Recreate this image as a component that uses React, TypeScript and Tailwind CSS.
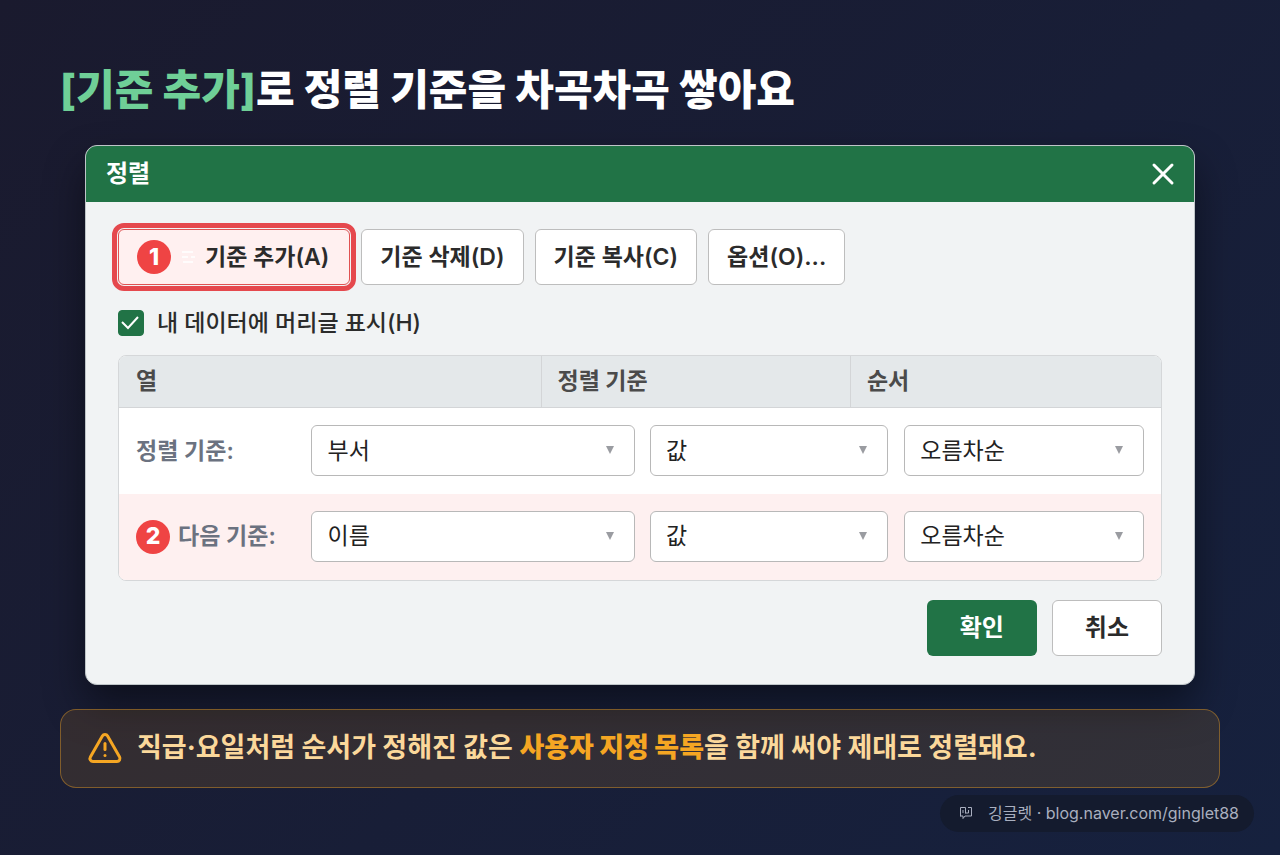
import { useState } from "react";
import { TriangleAlert, X } from "lucide-react";
import clsx from "clsx";

const columnOptions = ["부서", "이름", "직급"];
const valueOptions = ["값", "셀 색", "글꼴 색"];
const orderOptions = ["오름차순", "내림차순", "사용자 지정 목록"];

const levels = [
  { id: "sort-by", label: "정렬 기준:", column: "부서", step: null },
  { id: "then-by", label: "다음 기준:", column: "이름", step: 2 },
];

function StepBadge({ step }: { step: number }) {
  return (
    <span className="flex size-[34px] shrink-0 items-center justify-center rounded-full bg-[#ef4444] text-[23px] leading-none font-extrabold text-white">
      {step}
    </span>
  );
}

type SelectBoxProps = {
  id?: string;
  label?: string;
  value: string;
  options: string[];
};

function SelectBox({ id, label, value, options }: SelectBoxProps) {
  return (
    <div className="relative">
      <select
        id={id}
        aria-label={label}
        defaultValue={value}
        className="block h-[51px] w-full appearance-none rounded-md border border-[#b8b8b8] bg-white pr-10 pl-[15px] text-[23px] text-[#222222]"
      >
        {options.map((option) => (
          <option key={option}>{option}</option>
        ))}
      </select>
      <svg
        viewBox="0 0 8 8"
        className="pointer-events-none absolute top-[21px] right-[21px] size-2 fill-[#9a9ca1]"
        aria-hidden="true"
      >
        <path d="M0 0h8L4 8z" />
      </svg>
    </div>
  );
}

function ToolButton({ children }: { children: React.ReactNode }) {
  return (
    <button
      type="button"
      className="h-14 rounded-md border border-[#bdbdbd] bg-white px-[18px] text-[23px] font-semibold text-[#2b2b2b]"
    >
      {children}
    </button>
  );
}

function LevelTable() {
  return (
    <div className="mt-[14px] overflow-hidden rounded-lg border border-[#d5d7d9] bg-white">
      <table className="w-full table-fixed border-collapse text-left text-[23px]">
        <colgroup>
          <col className="w-[17.8%]" />
          <col className="w-[22.7%]" />
          <col className="w-[9.7%]" />
          <col className="w-[20%]" />
          <col className="w-[4.4%]" />
          <col />
        </colgroup>
        <thead>
          <tr className="h-[52px] border-b border-[#d3d5d7] bg-[#e4e8ea] text-[#4b4b4b]">
            <th colSpan={2} className="px-[17px] font-bold">
              열
            </th>
            <th colSpan={2} className="border-l border-[#d3d5d7] px-4 font-bold">
              정렬 기준
            </th>
            <th colSpan={2} className="border-l border-[#d3d5d7] px-4 font-bold">
              순서
            </th>
          </tr>
        </thead>
        <tbody>
          {levels.map((level) => (
            <tr
              key={level.id}
              className={clsx("h-[86px]", level.step && "bg-[#fef0f0]")}
            >
              <th scope="row" className="pl-[17px] font-semibold text-[#6b7280]">
                <div className="flex items-center gap-2">
                  {level.step && <StepBadge step={level.step} />}
                  <label htmlFor={level.id} className="whitespace-nowrap">
                    {level.label}
                  </label>
                </div>
              </th>
              <td colSpan={2} className="px-[7px]">
                <SelectBox
                  id={level.id}
                  value={level.column}
                  options={columnOptions}
                />
              </td>
              <td colSpan={2} className="px-2">
                <SelectBox
                  label={`${level.label} 정렬 기준`}
                  value="값"
                  options={valueOptions}
                />
              </td>
              <td className="pr-[17px] pl-2">
                <SelectBox
                  label={`${level.label} 순서`}
                  value="오름차순"
                  options={orderOptions}
                />
              </td>
            </tr>
          ))}
        </tbody>
      </table>
    </div>
  );
}

function SortDialog() {
  const [hasHeader, setHasHeader] = useState(true);

  return (
    <section
      role="dialog"
      aria-labelledby="dialog-title"
      className="mx-[25px] mt-[26px] overflow-hidden rounded-xl border border-[#bfc5c8] bg-[#f1f3f4] shadow-[0_20px_40px_rgba(0,0,0,0.45)]"
    >
      <header className="flex h-14 items-center justify-between bg-[#217346] pr-[13px] pl-5 text-white">
        <h2 id="dialog-title" className="text-2xl font-bold">
          정렬
        </h2>
        <button type="button" aria-label="닫기">
          <X className="size-9" strokeWidth={2} />
        </button>
      </header>

      <div className="px-8 pt-[27px] pb-7">
        <div className="flex gap-[11px]">
          <button
            type="button"
            className="flex h-14 items-center gap-[9px] rounded-md border border-[#e05252] bg-[#fff0f0] pr-5 pl-[18px] text-[23px] font-semibold text-[#2b2b2b] outline-5 outline-offset-1 outline-[#e5484d]"
          >
            <StepBadge step={1} />
            <svg
              viewBox="0 0 16 16"
              className="size-4 fill-none stroke-white"
              strokeWidth="1.5"
              aria-hidden="true"
            >
              <path d="M2 3h11M2 8h6M11 8h4M3 13h10" />
            </svg>
            기준 추가(A)
          </button>
          <ToolButton>기준 삭제(D)</ToolButton>
          <ToolButton>기준 복사(C)</ToolButton>
          <ToolButton>옵션(O)...</ToolButton>
        </div>

        <label className="mt-[21px] flex w-fit items-center gap-[13px] text-[23px] font-medium text-[#2b2b2b]">
          <span className="relative flex">
            <input
              type="checkbox"
              checked={hasHeader}
              onChange={(e) => setHasHeader(e.target.checked)}
              className="size-[26px] appearance-none rounded-sm border border-[#217346] checked:bg-[#217346]"
            />
            {hasHeader && (
              <svg
                viewBox="0 0 26 26"
                className="pointer-events-none absolute inset-0 fill-none stroke-white stroke-2"
                aria-hidden="true"
              >
                <path d="M4 12l6 6L20 7" />
              </svg>
            )}
          </span>
          내 데이터에 머리글 표시(H)
        </label>

        <LevelTable />

        <div className="mt-[19px] flex justify-end gap-[15px]">
          <button
            type="button"
            className="h-14 rounded-md bg-[#217346] px-[33px] text-2xl font-bold text-white"
          >
            확인
          </button>
          <button
            type="button"
            className="h-14 rounded-md border border-[#bdbdbd] bg-white px-8 text-2xl font-semibold text-[#2b2b2b]"
          >
            취소
          </button>
        </div>
      </div>
    </section>
  );
}

export default function App() {
  return (
    <main className="min-h-screen bg-linear-135 from-[#1a1a2e] to-[#16213e] pt-[60px] pb-[23px] font-['Inter','Noto_Sans_CJK_KR',sans-serif]">
      <div className="px-[60px]">
        <h1 className="text-[42px] leading-[59px] font-extrabold text-white">
          <span className="text-[#6fcf97]">[기준 추가]</span>로 정렬 기준을
          차곡차곡 쌓아요
        </h1>

        <SortDialog />

        <aside className="mt-6 flex min-h-[79px] items-center gap-[14px] rounded-2xl border border-[#f5a623]/40 bg-[#f5a623]/12 px-[26px] text-[27px] font-bold text-[#fbd89b]">
          <TriangleAlert className="size-9 shrink-0 text-[#f5a623]" strokeWidth={2} />
          <p>
            직급·요일처럼 순서가 정해진 값은{" "}
            <strong className="text-[#f5a623]">사용자 지정 목록</strong>을 함께
            써야 제대로 정렬돼요.
          </p>
        </aside>
      </div>

      <footer className="mt-[7px] flex justify-end px-[26px]">
        <a
          href="#blog"
          className="flex h-[37px] items-center gap-4 rounded-full bg-[#141b2e] pr-[15px] pl-5 text-base text-[#a9afbf]"
        >
          <svg
            viewBox="0 0 12 12"
            className="size-3 fill-none stroke-current"
            aria-hidden="true"
          >
            <path d="M.5 9.500V.5H5.500V6.500M8 .5H11.500V9H5L3 11.500V9H.5M3 3V6M5.500 6H8.500V3" />
          </svg>
          깅글렛 · blog.naver.com/ginglet88
        </a>
      </footer>
    </main>
  );
}
